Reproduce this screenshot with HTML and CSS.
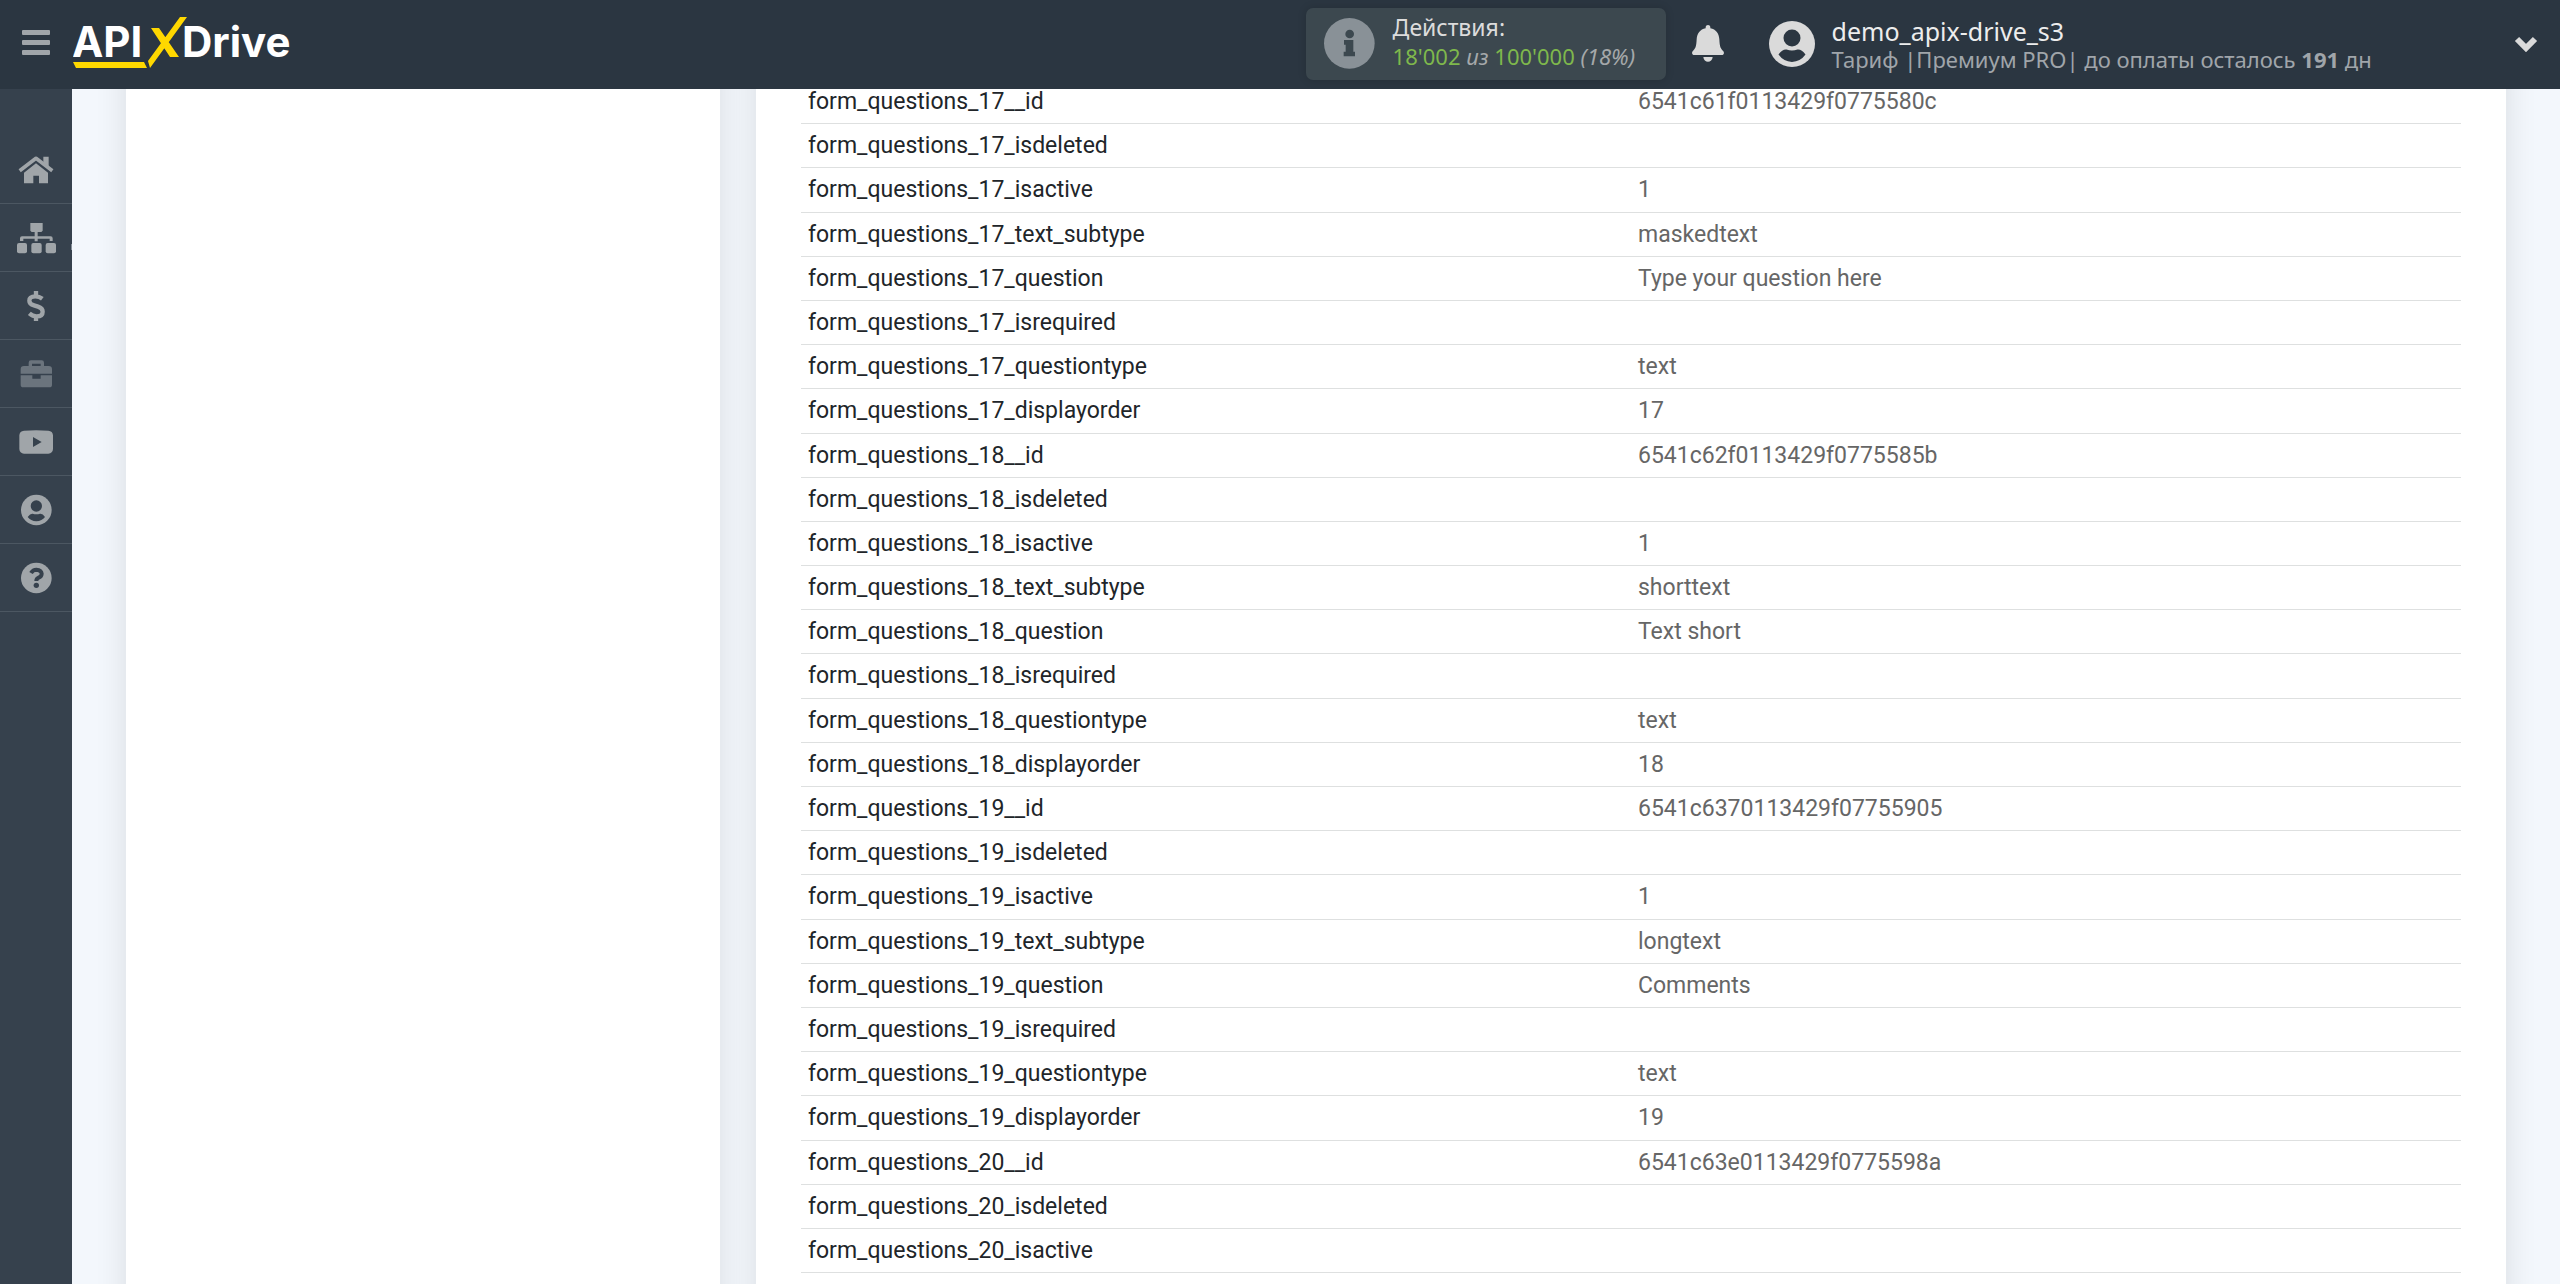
FILE: index.html
```html
<!DOCTYPE html>
<html lang="ru">
<head>
<meta charset="utf-8">
<meta name="viewport" content="width=device-width, initial-scale=1">
<title>ApiX-Drive</title>
<link rel="stylesheet" href="styles.css">
</head>
<body>
<header class="topbar">
  <button class="menu-button" type="button" aria-label="Меню"><span></span><span></span><span></span></button>
  <a class="logo" href="#">
    <svg viewBox="0 0 224 60" width="224" height="60" aria-label="APIXDrive">
      <text class="logo-text" x="-1" y="45">API</text>
      <text class="logo-text" x="109" y="45">Drive</text>
      <path class="logo-mark" d="M0 50H71L74 56H3ZM78 16H86L106 45H97ZM107 5H114L77 56L75 49Z"/>
    </svg>
  </a>
  <div class="account">
    <div class="usage">
      <svg class="usage-icon" viewBox="0 0 153 153" width="51" height="51"><circle cx="76" cy="76" r="76" fill="#899197"/><circle cx="77" cy="48" r="13" fill="#3c484f"/><path fill="#3c484f" d="M60 66H88V101H93V115H59V101H65V80H60Z"/></svg>
      <div class="usage-text">
        <div class="usage-title">Действия:</div>
        <div class="usage-count"><b>18'002</b> <i>из</i> <b>100'000</b> <i>(18%)</i></div>
      </div>
    </div>
    <button class="bell" type="button" aria-label="Уведомления">
      <svg viewBox="0 0 96 111" width="32" height="37"><path fill="#dadada" d="M41 7C41-2 55-2 55 7V10C72 13 81 26 82 43C83 66 86 71 94 79C98 84 95 90 89 90H7C1 90-2 84 2 79C10 71 13 66 14 43C15 26 24 13 41 10ZM34 96H62C61 115 35 115 34 96Z"/></svg>
    </button>
    <svg class="avatar" viewBox="15 2 92 92" width="46" height="46"><circle cx="61" cy="48" r="46" fill="#dadada"/><circle cx="61" cy="36" r="17" fill="#2b3641"/><path fill="#2b3641" d="M34 69Q42 58 50 59Q61 63 72 59Q80 58 88 69Q78 83 61 84Q44 83 34 69Z"/></svg>
    <div class="user">
      <div class="user-name">demo_apix-drive_s3</div>
      <div class="user-plan">Тариф |Премиум PRO| до оплаты осталось <b>191</b> дн</div>
    </div>
    <button class="expand" type="button" aria-label="Развернуть">
      <svg viewBox="0 0 24 16" width="24" height="16"><path d="M3 3L12 12L21 3" fill="none" stroke="#dadada" stroke-width="6"/></svg>
    </button>
  </div>
</header>
<nav class="sidebar">
  <a class="side-link" href="#" aria-label="Главная"><svg viewBox="0 0 120 96" width="40" height="32"><path d="M11 50L60 13L109 50" fill="none" stroke="currentColor" stroke-width="11" stroke-linejoin="round"/><path fill="currentColor" d="M82 8H98V42L82 30ZM60 28L96 56V88H69V65H52V88H24V56Z"/></svg></a>
  <a class="side-link has-more" href="#" aria-label="Связи"><svg viewBox="0 0 120 96" width="40" height="32"><path fill="currentColor" d="M43 3H80V26L76 30H65V43H104Q110 43 110 49V57H101V50H65V58H56V50H22V57H12V49Q12 43 18 43H56V30H47L43 26Z"/><rect x="3" y="63" width="30" height="31" rx="6" fill="currentColor"/><rect x="46" y="63" width="31" height="31" rx="6" fill="currentColor"/><rect x="89" y="63" width="31" height="31" rx="6" fill="currentColor"/></svg></a>
  <a class="side-link" href="#" aria-label="Оплата"><svg viewBox="0 0 120 96" width="40" height="32"><path fill="none" stroke="currentColor" stroke-width="13" d="M79 26Q70 19 58 19Q40 19 40 32Q40 42 54 46L66 50Q80 55 80 65Q80 79 62 79Q50 79 40 70M60 3V19M60 79V93"/></svg></a>
  <a class="side-link dim" href="#" aria-label="Портфель"><svg viewBox="0 0 120 96" width="40" height="32"><path fill="currentColor" fill-rule="evenodd" d="M38 24V14Q38 7 45 7H77Q84 7 84 14V24H98Q108 24 108 34V47H14V34Q14 24 24 24ZM48 24H74V17H48ZM14 52H49V62H74V52H108V80Q108 88 100 88H22Q14 88 14 80Z"/></svg></a>
  <a class="side-link" href="#" aria-label="Видео"><svg viewBox="0 0 120 96" width="40" height="32"><path fill="currentColor" fill-rule="evenodd" d="M24 14Q60 11 97 14Q110 15 111 28V69Q110 82 97 83H24Q11 82 10 69V28Q11 15 24 14ZM51 33V63L77 48Z"/></svg></a>
  <a class="side-link" href="#" aria-label="Профиль"><svg viewBox="0 0 120 96" width="40" height="32"><circle cx="61" cy="48" r="46" fill="currentColor"/><circle cx="61" cy="36" r="17" fill="#36414d"/><path fill="#36414d" d="M35 69Q43 58 50 59Q61 63 72 59Q80 58 87 69Q78 81 61 82Q44 81 35 69Z"/></svg></a>
  <a class="side-link" href="#" aria-label="Помощь"><svg viewBox="0 0 120 96" width="40" height="32"><circle cx="61" cy="48" r="46" fill="currentColor"/><path fill="none" stroke="#36414d" stroke-width="12" d="M45 33Q51 23 61 23Q76 24 77 35Q77 43 68 47Q61 50 61 57"/><circle cx="61" cy="70" r="8" fill="#36414d"/></svg></a>
</nav>
<main class="content">
  <aside class="card"></aside>
  <section class="card data-card">
    <table class="data">
      <tbody>
        <tr><td>form_questions_17__id</td><td>6541c61f0113429f0775580c</td></tr>
        <tr><td>form_questions_17_isdeleted</td><td></td></tr>
        <tr><td>form_questions_17_isactive</td><td>1</td></tr>
        <tr><td>form_questions_17_text_subtype</td><td>maskedtext</td></tr>
        <tr><td>form_questions_17_question</td><td>Type your question here</td></tr>
        <tr><td>form_questions_17_isrequired</td><td></td></tr>
        <tr><td>form_questions_17_questiontype</td><td>text</td></tr>
        <tr><td>form_questions_17_displayorder</td><td>17</td></tr>
        <tr><td>form_questions_18__id</td><td>6541c62f0113429f0775585b</td></tr>
        <tr><td>form_questions_18_isdeleted</td><td></td></tr>
        <tr><td>form_questions_18_isactive</td><td>1</td></tr>
        <tr><td>form_questions_18_text_subtype</td><td>shorttext</td></tr>
        <tr><td>form_questions_18_question</td><td>Text short</td></tr>
        <tr><td>form_questions_18_isrequired</td><td></td></tr>
        <tr><td>form_questions_18_questiontype</td><td>text</td></tr>
        <tr><td>form_questions_18_displayorder</td><td>18</td></tr>
        <tr><td>form_questions_19__id</td><td>6541c6370113429f07755905</td></tr>
        <tr><td>form_questions_19_isdeleted</td><td></td></tr>
        <tr><td>form_questions_19_isactive</td><td>1</td></tr>
        <tr><td>form_questions_19_text_subtype</td><td>longtext</td></tr>
        <tr><td>form_questions_19_question</td><td>Comments</td></tr>
        <tr><td>form_questions_19_isrequired</td><td></td></tr>
        <tr><td>form_questions_19_questiontype</td><td>text</td></tr>
        <tr><td>form_questions_19_displayorder</td><td>19</td></tr>
        <tr><td>form_questions_20__id</td><td>6541c63e0113429f0775598a</td></tr>
        <tr><td>form_questions_20_isdeleted</td><td></td></tr>
        <tr><td>form_questions_20_isactive</td><td></td></tr>
      </tbody>
    </table>
  </section>
</main>
</body>
</html>
```
FILE: styles.css
```css
* { box-sizing: border-box; }

body {
  margin: 0;
  min-height: 100vh;
  display: grid;
  grid-template-columns: 72px 1fr;
  background: #f3f7fc;
  font-family: Roboto, "Liberation Sans", sans-serif;
}

button {
  border: 0;
  padding: 0;
  background: none;
  display: flex;
  cursor: pointer;
}

/* Top bar, fixed over the scrolled content */
.topbar {
  position: fixed;
  top: 0;
  left: 0;
  right: 0;
  z-index: 2;
  height: 89px;
  padding-left: 22px;
  display: flex;
  align-items: center;
  background: #2b3641;
  font-family: "Noto Sans", sans-serif;
}

.menu-button {
  width: 28px;
  flex-direction: column;
  gap: 5px;
  margin-right: 23px;
  margin-bottom: 4px;
}

.menu-button span {
  height: 5px;
  border-radius: 1px;
  background: #a0a5a9;
}

.logo {
  display: flex;
  margin-bottom: 6px;
}

.logo-text {
  font-family: Inter, sans-serif;
  font-size: 42px;
  font-weight: 700;
  fill: #fff;
}

.logo-mark { fill: #ffd800; }

.account {
  flex: 0 0 49vw;
  margin-left: auto;
  padding-bottom: 2px;
  display: flex;
  align-items: center;
}

.usage {
  width: 360px;
  height: 72px;
  padding-left: 18px;
  display: flex;
  align-items: center;
  gap: 18px;
  border-radius: 7px;
  background: #3c484f;
  box-shadow: 0 0 8px rgba(0, 0, 0, .15);
}

.usage-text {
  font-size: 22px;
  line-height: 29px;
  white-space: nowrap;
  padding-bottom: 3px;
}

.usage-title {
  font-size: 23px;
  color: #dcdcdc;
}

.usage-count { color: #a5a8aa; }

.usage-count b {
  color: #7fb84c;
  font-weight: 400;
}

.bell { margin-left: 26px; }
.avatar { margin-left: 45px; }

.user {
  flex: 1;
  margin-left: 17px;
  padding-top: 2px;
  line-height: 28px;
  white-space: nowrap;
}

.user-name {
  font-size: 25px;
  color: #ededed;
}

.user-plan {
  font-size: 22px;
  color: #a0a5aa;
}

.expand { margin-right: 22px; }

/* Side navigation */
.sidebar {
  padding-top: 136px;
  background: #36414d;
}

.side-link {
  position: relative;
  height: 68px;
  display: flex;
  align-items: center;
  justify-content: center;
  border-bottom: 1px solid #4c5762;
  color: #a0a5a9;
}

.side-link.dim { color: #6b747d; }

.has-more::after {
  content: "";
  position: absolute;
  right: 0;
  bottom: 21px;
  width: 1px;
  height: 6px;
  background: #87909a;
}

/* Content cards */
.content {
  padding: 0 54px;
  display: grid;
  grid-template-columns: 594fr 1750fr;
  gap: 36px;
  overflow: hidden;
}

/* Cards run past the bottom edge so their shadow stays even */
.card {
  margin-bottom: -40px;
  background: #fff;
  box-shadow: 0 0 30px rgba(0, 0, 0, .11);
}

.data-card { padding: 80px 45px 0; }

.data {
  width: 100%;
  table-layout: fixed;
  border-collapse: separate;
  border-spacing: 0;
  font-size: 23px;
  line-height: 1.4;
}

.data td {
  padding: 6px 7px 5px;
  border-bottom: 1px solid #dee0e0;
  color: #212529;
}

.data td:empty::before { content: "\00a0"; }
.data td + td { color: #666; }
```
